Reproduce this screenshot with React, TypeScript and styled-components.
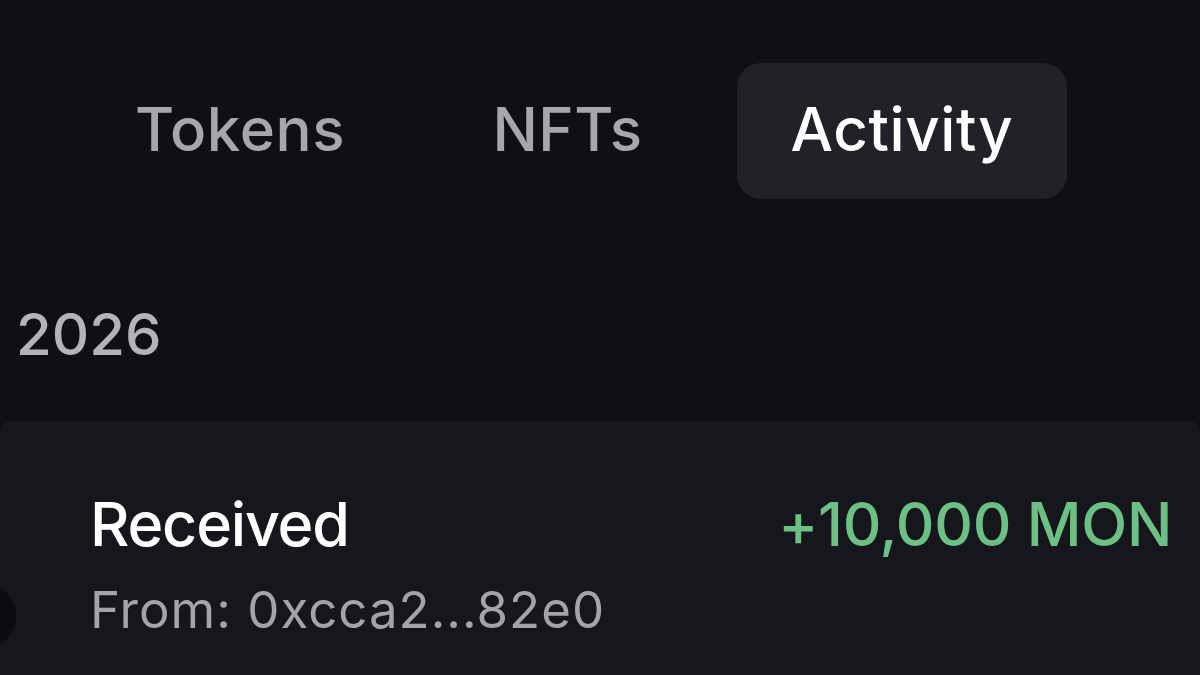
import React from "react";
import styled, { createGlobalStyle } from "styled-components";

const Global = createGlobalStyle`
  html, body { margin: 0; padding: 0; background: #0f1014; }
  body { font-family: Inter, "Noto Sans", sans-serif; -webkit-font-smoothing: antialiased; }
`;

const Page = styled.div`
  width: 1200px;
  height: 675px;
  overflow: hidden;
  background: #0f1014;
  display: flex;
  flex-direction: column;
`;

const Tabs = styled.div`
  display: flex;
  align-items: center;
  height: 136px;
  margin-top: 63px;
  padding-left: 100px;
`;

const Tab = styled.div<{ $active?: boolean; $w: number; $shift?: number }>`
  width: ${(p) => p.$w}px;
  height: 136px;
  padding-bottom: 4px;
  padding-left: ${(p) => p.$shift ?? 0}px;
  box-sizing: border-box;
  display: flex;
  align-items: center;
  justify-content: center;
  border-radius: 24px;
  font-size: 60px;
  font-weight: 500;
  letter-spacing: 0.6px;
  color: ${(p) => (p.$active ? "#ffffff" : "#a5a7ad")};
  background: ${(p) => (p.$active ? "#212227" : "transparent")};
`;

const Year = styled.div`
  margin-top: 100px;
  padding-left: 16px;
  font-size: 58px;
  font-weight: 500;
  color: #b2b4ba;
  line-height: 70px;
`;

const Card = styled.div`
  margin-top: 52px;
  flex: 1;
  background: #16171c;
  border-radius: 10px 10px 0 0;
  position: relative;
  display: flex;
  justify-content: space-between;
  padding: 66px 28px 0 90px;
`;

const Avatar = styled.div`
  position: absolute;
  left: -50px;
  top: 162px;
  width: 66px;
  height: 66px;
  border-radius: 50%;
  background: #0b0c0f;
`;

const Info = styled.div`
  display: flex;
  flex-direction: column;
`;

const Title = styled.div`
  font-size: 61px;
  font-weight: 500;
  letter-spacing: -1.2px;
  color: #ffffff;
  line-height: 74px;
`;

const Sub = styled.div`
  margin-top: 19px;
  font-size: 51px;
  font-weight: 400;
  letter-spacing: 1px;
  color: #a2a4aa;
  line-height: 60px;
`;

const Amount = styled.div`
  font-size: 60px;
  font-weight: 500;
  letter-spacing: -0.3px;
  color: #6cc086;
  line-height: 74px;
`;

export default function App() {
  return (
    <Page>
      <Global />
      <Tabs>
        <Tab $w={280}>Tokens</Tab>
        <Tab $w={357} $shift={18}>
          NFTs
        </Tab>
        <Tab $w={330} $active>
          Activity
        </Tab>
      </Tabs>
      <Year>2026</Year>
      <Card>
        <Avatar />
        <Info>
          <Title>Received</Title>
          <Sub>From: 0xcca2...82e0</Sub>
        </Info>
        <Amount>+10,000 MON</Amount>
      </Card>
    </Page>
  );
}
